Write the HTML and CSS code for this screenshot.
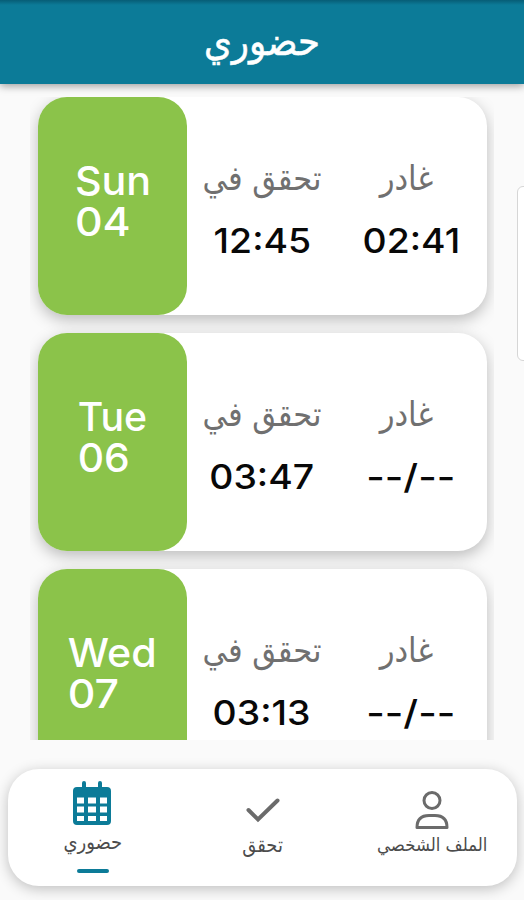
FILE: index.html
```html
<!DOCTYPE html>
<html lang="ar">
<head><meta charset="utf-8"><title>حضوري</title><link rel="stylesheet" href="styles.css"></head>
<body>
<header class="bar"><h1>حضوري</h1></header>
<main class="list">
<article class="card"><div class="day"><div class="date"><span>Sun</span><span class="num">04</span></div></div><div class="cell"><span class="label">تحقق في</span><span class="time">12:45</span></div><div class="cell out"><span class="label">غادر</span><span class="time">02:41</span></div></article>
<article class="card"><div class="day"><div class="date narrow"><span>Tue</span><span class="num">06</span></div></div><div class="cell"><span class="label">تحقق في</span><span class="time">03:47</span></div><div class="cell out"><span class="label">غادر</span><span class="time dash">--/--</span></div></article>
<article class="card"><div class="day"><div class="date"><span>Wed</span><span class="num">07</span></div></div><div class="cell"><span class="label">تحقق في</span><span class="time">03:13</span></div><div class="cell out"><span class="label">غادر</span><span class="time dash">--/--</span></div></article>
</main>
<nav class="tabs">
<a class="tab active"><svg width="40" height="46" viewBox="0 0 40 46"><path fill="#0c7b98" fill-rule="evenodd" d="M10 3a2 2 0 0 1 4 0V7h12V3a2 2 0 0 1 4 0V7h5a4 4 0 0 1 4 4v30a4 4 0 0 1-4 4H5a4 4 0 0 1-4-4V11a4 4 0 0 1 4-4h5zM5 17.500v6h7v-6zM16 17.500v6h8v-6zM28 17.500v6h7v-6zM5 26.500v6h7v-6zM16 26.500v6h8v-6zM28 26.500v6h7v-6zM5 36v5h7v-5zM16 36v5h8v-5zM28 36v5h7v-5z"/></svg><span>حضوري</span><i class="mark"></i></a>
<a class="tab"><svg width="40" height="46" viewBox="0 0 40 46"><path d="M5.500 30l9.500 9.500L34.500 20.500" fill="none" stroke="#6b6b6b" stroke-width="4" stroke-linecap="round"/></svg><span>تحقق</span></a>
<a class="tab profile"><svg width="40" height="46" viewBox="0 0 40 46"><g fill="none" stroke="#6b6b6b" stroke-width="3" stroke-linejoin="round"><circle cx="20" cy="20.500" r="8"/><path d="M5 47.500q0-12 12-12h6q12 0 12 12z"/></g></svg><span>الملف الشخصي</span></a>
</nav>
<aside class="edge"></aside>
</body>
</html>
```
FILE: styles.css
```css
*{box-sizing:border-box}
body{margin:0;height:900px;overflow:hidden;position:relative;background:#fafafa;font-family:"DejaVu Sans Condensed","DejaVu Sans",sans-serif}
.bar{position:relative;z-index:1;height:84px;background:linear-gradient(#075d76,#0c7b98 5px);color:#fff;text-align:center;box-shadow:0 2px 8px rgba(0,0,0,.38)}
.bar h1{margin:0;font-size:39.5px;font-weight:400;line-height:82px;-webkit-text-stroke:.5px #fff}
.list{height:643px;margin:13px 30px 0;overflow:hidden;padding:0 7px 0 8px;display:flex;flex-direction:column;gap:18px}
.card{display:flex;flex:none;height:218px;background:#fff;border-radius:29px;box-shadow:0 5px 15px rgba(0,0,0,.25)}
.day{width:149px;background:#8bc34a;border-radius:29px;color:#fff;font:500 40px/41px Inter,sans-serif;display:flex;justify-content:center;padding-top:63px}
.date{display:flex;flex-direction:column;transform:scaleX(1.03)}
.narrow{transform:scaleX(.98)}
.num{transform:scaleX(1.04);transform-origin:left}
.cell{width:150px;display:flex;flex-direction:column;align-items:center;padding-top:57px}
.label{font-size:34px;line-height:48px;height:64px;color:#707070}
.out .label{margin-right:11px}
.time{font:500 34px/45px Inter,sans-serif;color:#080808;transform:scaleX(1.1)}
.out .time{margin-right:2px}
.dash{transform:scaleX(1.18)}
.tabs{display:grid;grid-template-columns:repeat(3,169.7px);width:509px;height:117px;margin:29px 0 0 8px;background:#fff;border-radius:31px;box-shadow:0 3px 14px rgba(0,0,0,.24)}
.tab{display:flex;flex-direction:column;align-items:center;padding-top:11px;font-size:20px;line-height:26px;color:#4c4c4c}
.tab svg{display:block;overflow:visible}
.tab span{margin-top:6px;white-space:nowrap}
.active span{margin-top:3px}
.tab.active svg{margin-left:-2px}
.profile{font-size:18.4px}
.mark{width:32px;height:4px;margin-top:14px;border-radius:2px;background:#0c7b98}
.edge{position:absolute;left:517px;top:186px;width:20px;height:175px;border:1px solid #d6d6d6;border-radius:6px;background:#fff}
```
